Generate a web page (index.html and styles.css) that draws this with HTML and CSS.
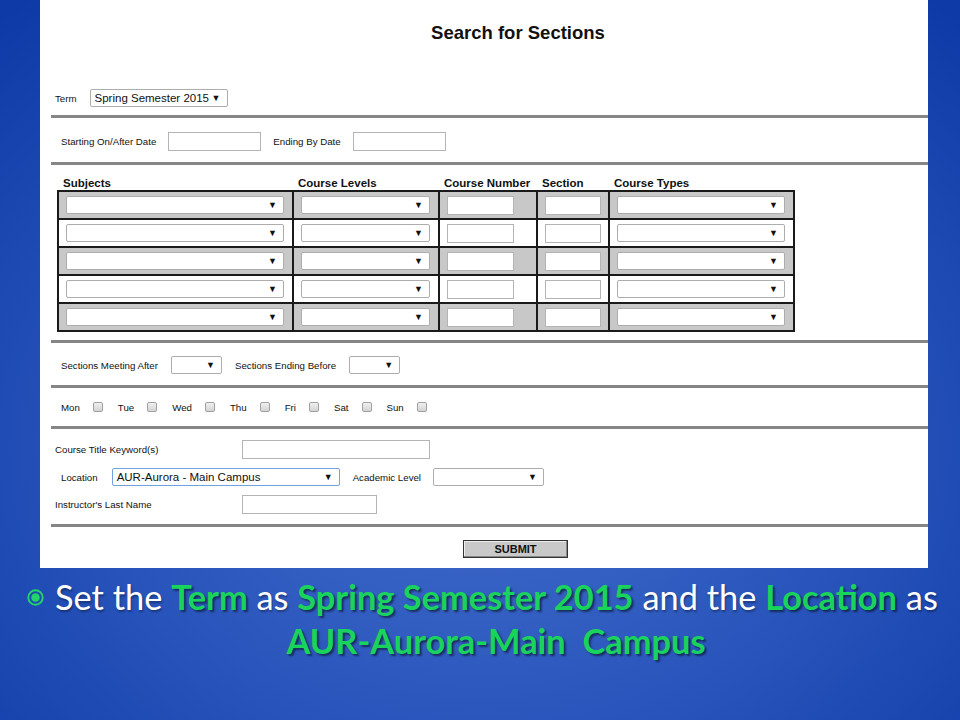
FILE: index.html
```html
<!DOCTYPE html>
<html lang="en">
<head>
    <meta charset="UTF-8">
    <meta name="viewport" content="width=device-width, initial-scale=1.0">
    <title>Search for Sections</title>
    <link rel="stylesheet" href="styles.css">
</head>
<body>
    <!-- Screenshot of the search form -->
    <div class="panel">
        <div class="top-section">
            <h1 class="title">Search for Sections</h1>
            <div class="row term-row">
                <span class="label">Term</span>
                <div class="select term-select"><span>Spring Semester 2015</span><span class="arrow">&#9660;</span></div>
            </div>
        </div>
        <div class="rule"></div>

        <div class="section date-section">
            <div class="row">
                <span class="label">Starting On/After Date</span>
                <div class="input date-input"></div>
                <span class="label">Ending By Date</span>
                <div class="input date-input"></div>
            </div>
        </div>
        <div class="rule"></div>

        <div class="section course-section">
            <table class="course-table">
                <colgroup>
                    <col class="col-subject">
                    <col class="col-level">
                    <col class="col-number">
                    <col class="col-section">
                    <col class="col-type">
                </colgroup>
                <thead>
                    <tr>
                        <th>Subjects</th>
                        <th>Course Levels</th>
                        <th>Course Number</th>
                        <th>Section</th>
                        <th>Course Types</th>
                    </tr>
                </thead>
                <tbody>
                    <tr class="shaded">
                        <td><div class="select"><span></span><span class="arrow">&#9660;</span></div></td>
                        <td><div class="select"><span></span><span class="arrow">&#9660;</span></div></td>
                        <td><div class="input num-input"></div></td>
                        <td><div class="input sec-input"></div></td>
                        <td><div class="select"><span></span><span class="arrow">&#9660;</span></div></td>
                    </tr>
                    <tr>
                        <td><div class="select"><span></span><span class="arrow">&#9660;</span></div></td>
                        <td><div class="select"><span></span><span class="arrow">&#9660;</span></div></td>
                        <td><div class="input num-input"></div></td>
                        <td><div class="input sec-input"></div></td>
                        <td><div class="select"><span></span><span class="arrow">&#9660;</span></div></td>
                    </tr>
                    <tr class="shaded">
                        <td><div class="select"><span></span><span class="arrow">&#9660;</span></div></td>
                        <td><div class="select"><span></span><span class="arrow">&#9660;</span></div></td>
                        <td><div class="input num-input"></div></td>
                        <td><div class="input sec-input"></div></td>
                        <td><div class="select"><span></span><span class="arrow">&#9660;</span></div></td>
                    </tr>
                    <tr>
                        <td><div class="select"><span></span><span class="arrow">&#9660;</span></div></td>
                        <td><div class="select"><span></span><span class="arrow">&#9660;</span></div></td>
                        <td><div class="input num-input"></div></td>
                        <td><div class="input sec-input"></div></td>
                        <td><div class="select"><span></span><span class="arrow">&#9660;</span></div></td>
                    </tr>
                    <tr class="shaded">
                        <td><div class="select"><span></span><span class="arrow">&#9660;</span></div></td>
                        <td><div class="select"><span></span><span class="arrow">&#9660;</span></div></td>
                        <td><div class="input num-input"></div></td>
                        <td><div class="input sec-input"></div></td>
                        <td><div class="select"><span></span><span class="arrow">&#9660;</span></div></td>
                    </tr>
                </tbody>
            </table>
        </div>
        <div class="rule"></div>

        <div class="section time-section">
            <div class="row">
                <span class="label">Sections Meeting After</span>
                <div class="select time-select"><span></span><span class="arrow">&#9660;</span></div>
                <span class="label">Sections Ending Before</span>
                <div class="select time-select"><span></span><span class="arrow">&#9660;</span></div>
            </div>
        </div>
        <div class="rule"></div>

        <div class="section days-section">
            <div class="days">
                <span class="label">Mon</span><span class="checkbox"></span>
                <span class="label">Tue</span><span class="checkbox"></span>
                <span class="label">Wed</span><span class="checkbox"></span>
                <span class="label">Thu</span><span class="checkbox"></span>
                <span class="label">Fri</span><span class="checkbox"></span>
                <span class="label">Sat</span><span class="checkbox"></span>
                <span class="label">Sun</span><span class="checkbox"></span>
            </div>
        </div>
        <div class="rule"></div>

        <div class="section extra-section">
            <div class="row">
                <span class="label wide-label">Course Title Keyword(s)</span>
                <div class="input keyword-input"></div>
            </div>
            <div class="row location-row">
                <span class="label">Location</span>
                <div class="select location-select focused"><span>AUR-Aurora - Main Campus</span><span class="arrow">&#9660;</span></div>
                <span class="label">Academic Level</span>
                <div class="select level-select"><span></span><span class="arrow">&#9660;</span></div>
            </div>
            <div class="row">
                <span class="label wide-label">Instructor's Last Name</span>
                <div class="input instructor-input"></div>
            </div>
        </div>
        <div class="rule"></div>

        <div class="section submit-section">
            <div class="submit-btn">SUBMIT</div>
        </div>
    </div>

    <!-- Slide caption -->
    <div class="caption">
        <svg class="bullet" width="17" height="17" viewBox="0 0 16 16">
            <circle cx="8" cy="8" r="6.8" fill="none" stroke="#22d468" stroke-width="1.8"/>
            <circle cx="8" cy="8" r="4" fill="#22d468"/>
        </svg>
        <p class="caption-text">Set the <b>Term</b> as <b>Spring Semester 2015</b> and the <b>Location</b> as<br><b>AUR-Aurora-Main&nbsp; Campus</b></p>
    </div>
</body>
</html>
```

FILE: styles.css
```css
/* General Reset */
body, html {
    margin: 0;
    padding: 0;
    height: 720px;
    overflow: hidden;
}
body {
    background: radial-gradient(ellipse 75% 80% at 50% 62%, #416bca 0%, #2c58be 45%, #0d3aa6 100%);
    font-family: 'Liberation Sans', Arial, sans-serif;
}
/* Form Screenshot */
.panel {
    margin-left: 40px;
    width: 888px;
    height: 568px;
    background-color: #fff;
    color: #111;
}
.top-section {
    height: 115px;
    padding-top: 22px;
    box-sizing: border-box;
}
.title {
    margin: 0;
    padding-left: 68px;
    font-size: 18.5px;
    line-height: 22px;
    text-align: center;
}
.row {
    display: flex;
    align-items: center;
    gap: 12px;
}
.term-row {
    margin-top: 45px;
    padding-left: 15px;
    gap: 13px;
}
.label {
    font-size: 9.7px;
    white-space: nowrap;
}
.rule {
    margin-left: 11px;
    height: 3px;
    background-color: #858585;
}
.select {
    display: flex;
    justify-content: space-between;
    align-items: center;
    height: 18px;
    box-sizing: border-box;
    padding: 0 6px 0 4px;
    border: 1px solid #adadad;
    border-radius: 2px;
    background-color: #fff;
    font-size: 11.5px;
    white-space: nowrap;
}
.select .arrow {
    font-size: 9px;
    color: #111;
}
.focused {
    border-color: #6fa3e0;
}
.term-select {
    width: 138px;
}
.input {
    height: 19px;
    box-sizing: border-box;
    border: 1px solid #b4b4b4;
    background-color: #fff;
}
.date-section {
    height: 44px;
    padding: 14px 0 0 21px;
    box-sizing: border-box;
}
.date-input {
    width: 93px;
}
/* Course table */
.course-section {
    height: 175px;
    padding: 11px 0 0 17px;
    box-sizing: border-box;
}
.course-table {
    border-collapse: collapse;
    table-layout: fixed;
    width: 736px;
}
.col-subject { width: 235px; }
.col-level { width: 146px; }
.col-number { width: 98px; }
.col-section { width: 72px; }
.col-type { width: 185px; }
.course-table th {
    font-size: 11.5px;
    text-align: left;
    padding: 0 0 0 5px;
    height: 14px;
    line-height: 14px;
    white-space: nowrap;
}
.course-table td {
    height: 28px;
    padding: 0 8px 0 7px;
    border: 2px solid #1a1a1a;
    box-sizing: border-box;
}
.course-table tr.shaded td {
    background-color: #c8c8c8;
}
.num-input {
    width: 67px;
}
.sec-input {
    width: 56px;
}
/* Time row */
.time-section {
    height: 42px;
    padding: 13px 0 0 21px;
    box-sizing: border-box;
}
.time-section .row {
    gap: 13px;
}
.time-select {
    width: 51px;
}
/* Days */
.days-section {
    height: 38px;
    display: flex;
    align-items: center;
    padding-left: 21px;
}
.days {
    display: flex;
    align-items: center;
}
.days .label {
    margin-right: 13px;
}
.checkbox {
    width: 10px;
    height: 10px;
    margin-right: 15px;
    box-sizing: border-box;
    border: 1px solid #a0a0a0;
    border-radius: 2px;
    background: linear-gradient(#f0f0f0, #d4d4d4);
}
/* Keyword, location, instructor */
.extra-section {
    height: 95px;
    padding: 11px 0 0 15px;
    box-sizing: border-box;
    display: flex;
    flex-direction: column;
    gap: 9px;
}
.wide-label {
    width: 187px;
}
.extra-section .row {
    gap: 0;
}
.keyword-input {
    width: 188px;
}
.location-row {
    padding-left: 6px;
}
.location-row .select {
    margin-left: 14px;
    margin-right: 13px;
}
.location-select {
    width: 228px;
}
.location-row .level-select {
    width: 111px;
    margin-left: 12px;
}
.instructor-input {
    width: 135px;
}
.submit-section {
    padding: 13px 0 0 423px;
}
.submit-btn {
    width: 105px;
    height: 18px;
    box-sizing: border-box;
    border: 1px solid #333;
    background-color: #c9c9c9;
    box-shadow: inset -1px -1px 0 #888, inset 1px 1px 0 #eee;
    font-size: 11px;
    font-weight: bold;
    line-height: 16px;
    text-align: center;
}
/* Caption */
.caption {
    display: flex;
    align-items: flex-start;
    padding: 7px 0 0 27px;
    gap: 11px;
}
.bullet {
    margin-top: 14px;
    flex-shrink: 0;
}
.caption-text {
    margin: 0;
    width: 882px;
    font-family: Lato, 'Open Sans', sans-serif;
    font-size: 34.4px;
    line-height: 44px;
    color: #fff;
    text-align: center;
    white-space: nowrap;
    text-shadow: 1px 2px 2px rgba(0, 0, 0, 0.35);
}
.caption-text b {
    color: #19d35c;
    text-shadow: 2px 2px 2px rgba(0, 0, 0, 0.5);
}
```
